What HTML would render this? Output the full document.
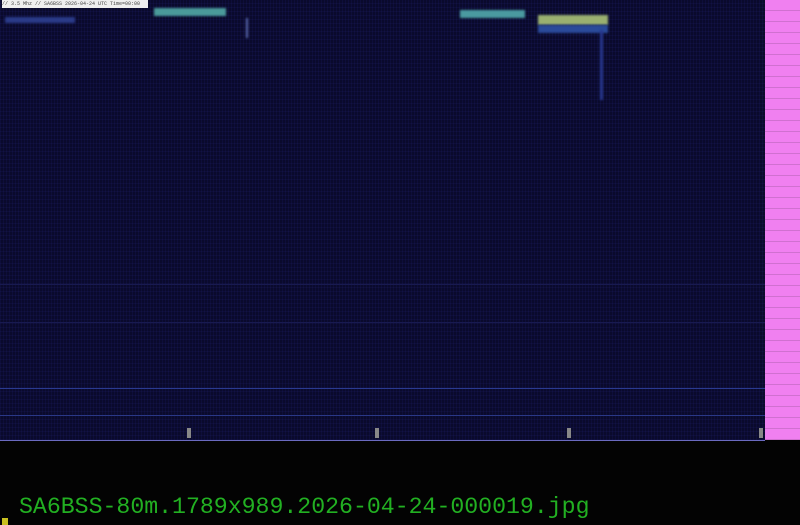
<!DOCTYPE html>
<html><head><style>
body{margin:0;width:800px;height:525px;background:#030303;overflow:hidden;position:relative;font-family:"Liberation Mono",monospace}
#spec{position:absolute;left:0;top:0;width:765px;height:440px;background:#0a0a2c;
background-image:repeating-linear-gradient(90deg,rgba(40,40,140,.15) 0 1px,transparent 1px 3px),repeating-linear-gradient(0deg,rgba(30,30,110,.18) 0 1px,transparent 1px 4px);}
#pink{position:absolute;left:765px;top:0;width:35px;height:440px;background:#f080f0;
background-image:repeating-linear-gradient(0deg,#d070d0 0 1px,transparent 1px 11px)}
.hl{position:absolute;left:0;width:765px;height:1px;background:#3a4aa8}
.blob{position:absolute;filter:blur(1px)}
#lbl{position:absolute;left:2px;top:0;width:146px;height:8px;background:#eee;font-size:5px;color:#444;line-height:8px;white-space:nowrap;overflow:hidden}
#name{position:absolute;left:19px;top:494px;font-size:23.2px;color:#22b022;white-space:nowrap;letter-spacing:0}
#y{position:absolute;left:2px;top:518px;width:6px;height:7px;background:#c8c020}
.bl{position:absolute;left:0;top:440px;width:765px;height:1px;background:#6a6ac0}
.t{position:absolute;top:428px;width:4px;height:10px;background:#888}
</style></head><body>
<div id="spec"></div>
<div class="hl" style="top:388px;background:#2a3a90"></div>
<div class="hl" style="top:415px;background:#2a3888"></div>
<div class="hl" style="top:322px;background:#181a50"></div>
<div class="hl" style="top:284px;background:#181a50"></div>
<div class="blob" style="left:154px;top:8px;width:72px;height:8px;background:#4a9a9a"></div>
<div class="blob" style="left:460px;top:10px;width:65px;height:8px;background:#4a9aa0"></div>
<div class="blob" style="left:538px;top:15px;width:70px;height:10px;background:#9ab070"></div>
<div class="blob" style="left:538px;top:25px;width:70px;height:8px;background:#2a4a9a"></div>
<div class="blob" style="left:5px;top:17px;width:70px;height:6px;background:#2a3a88"></div>
<div class="blob" style="left:246px;top:18px;width:2px;height:20px;background:#5a6ab0"></div>
<div class="blob" style="left:600px;top:30px;width:3px;height:70px;background:#283890"></div>
<div id="lbl">// 3.5 Mhz // SA6BSS 2026-04-24 UTC Time=00:00</div>
<div id="pink"></div>
<div class="bl"></div>
<div class="t" style="left:187px"></div><div class="t" style="left:375px"></div><div class="t" style="left:567px"></div><div class="t" style="left:759px"></div>
<div id="name">SA6BSS-80m.1789x989.2026-04-24-000019.jpg</div>
<div id="y"></div>
</body></html>
